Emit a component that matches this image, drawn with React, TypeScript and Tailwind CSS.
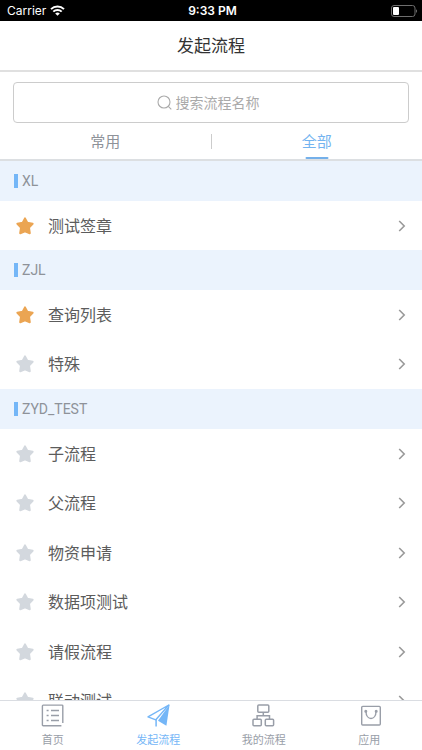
import React, { useState } from 'react';

type Process = { name: string; starred?: boolean };
type Group = { title: string; items: Process[] };

const groups: Group[] = [
  { title: 'XL', items: [{ name: '测试签章', starred: true }] },
  { title: 'ZJL', items: [{ name: '查询列表', starred: true }, { name: '特殊' }] },
  {
    title: 'ZYD_TEST',
    items: [
      { name: '子流程' },
      { name: '父流程' },
      { name: '物资申请' },
      { name: '数据项测试' },
      { name: '请假流程' },
      { name: '联动测试' },
    ],
  },
];

const StatusBar = () => (
  <div className="grid h-[21px] shrink-0 grid-cols-3 items-center bg-black pr-1 pl-[7px] font-[Inter,sans-serif] text-xs text-white">
    <div className="flex items-center gap-1">
      <span>Carrier</span>
      <svg width="15" height="11" viewBox="0 0 15 11" fill="none" stroke="currentColor" strokeWidth="2">
        <path d="M1 4.1a9.3 9.3 0 0 1 13 0" />
        <path d="M3.3 6.6a6 6 0 0 1 8.4 0" />
        <path d="M7.5 10.8 5.2 8.5a3.3 3.3 0 0 1 4.6 0z" fill="currentColor" stroke="none" />
      </svg>
    </div>
    <span className="text-center font-semibold">9:33 PM</span>
    <svg className="justify-self-end" width="27" height="12" viewBox="0 0 27 12">
      <rect x="0.5" y="0.5" width="23.5" height="11" rx="2.5" fill="none" stroke="#6e6e6e" />
      <rect x="2" y="2" width="6" height="8" rx="1" fill="#fff" />
      <path d="M25 4.2c1.4.5 1.4 3.1 0 3.6z" fill="#6e6e6e" />
    </svg>
  </div>
);

const Star: React.FC<{ on?: boolean }> = ({ on }) => (
  <svg
    className={on ? 'text-[#eba553]' : 'text-[#d3d8de]'}
    width="18"
    height="18"
    viewBox="0 0 18 18"
    fill="currentColor"
    stroke="currentColor"
    strokeWidth="2"
    strokeLinejoin="round"
  >
    <path d="M9 1.4l2.3 4.3 5.3 1-3.6 3.9.8 5.6L9 14.4l-4.8 1.8.8-5.6L1.4 6.7l5.3-1z" />
  </svg>
);

const Row: React.FC<{ item: Process }> = ({ item }) => (
  <li className="h-[49px] even:h-[50px]">
    <a href="#" className="flex h-full items-center px-4 text-base text-[#5c5c5c]">
      <Star on={item.starred} />
      <span className="ml-[14px] flex-1 pb-[2px]">{item.name}</span>
      <svg width="8" height="12" viewBox="0 0 8 12" fill="none" stroke="#999" strokeWidth="1.6">
        <path d="M1.2 1l5 5-5 5" />
      </svg>
    </a>
  </li>
);

const navItems = [
  {
    label: '首页',
    icon: (
      <g stroke="currentColor" strokeWidth="1.4" fill="none">
        <path d="M21.8 19V1.9a.8.8 0 0 0-.8-.8H2.2a.8.8 0 0 0-.8.8v19a.8.8 0 0 0 .8.8h18.2" />
        <path d="M10 6.5h8M10 11.5h8M10 16.5h8M5.6 6.5h2M5.6 11.5h2M5.6 16.5h2" />
      </g>
    ),
  },
  {
    label: '发起流程',
    icon: (
      <g>
        <path
          d="M21.8 1L1 12.8l7.8 3z"
          fill="none"
          stroke="currentColor"
          strokeWidth="1.4"
          strokeLinejoin="round"
        />
        <path d="M22.6.5L11 16.8l8.4 4.9z" fill="currentColor" />
        <path d="M9.1 15v7.6" stroke="currentColor" strokeWidth="1.5" />
      </g>
    ),
  },
  {
    label: '我的流程',
    icon: (
      <g stroke="currentColor" strokeWidth="1.5" fill="none">
        <rect x="5.8" y="1" width="11" height="7.2" rx="1" />
        <rect x="1" y="15.3" width="8.3" height="6.4" rx="1" />
        <rect x="13.3" y="15.3" width="8.3" height="6.4" rx="1" />
        <path d="M11.3 8.2v3.6M5.1 15.3v-3.5h12.4v3.5" />
      </g>
    ),
  },
  {
    label: '应用',
    icon: (
      <g stroke="currentColor" strokeWidth="1.4" fill="none">
        <rect x="3.7" y="2.4" width="18.6" height="18.6" rx="1" />
        <path d="M8 7.4c0 9.4 10 9.4 10 0" />
        <circle cx="7.8" cy="7.2" r=".8" fill="currentColor" />
        <circle cx="18.2" cy="7.2" r=".8" fill="currentColor" />
      </g>
    ),
  },
];

const App: React.FC = () => {
  const [tab, setTab] = useState('全部');

  return (
    <div className="flex h-screen flex-col bg-white font-['Noto_Sans_CJK_SC',sans-serif]">
      <StatusBar />

      <header className="flex h-[51px] shrink-0 items-center justify-center border-b-2 border-[#e0e0e0]">
        <h1 className="pb-[2px] text-[17px] text-[#333]">发起流程</h1>
      </header>

      <div className="shrink-0 px-[13px] pt-[10px]">
        <label className="flex h-[41px] items-center justify-center gap-1 rounded-[4px] border border-[#ccc]">
          <svg width="15" height="15" viewBox="0 0 15 15" fill="none" stroke="#aaa" strokeWidth="1.1">
            <circle cx="7" cy="7" r="6" />
            <path d="M11.3 11.3l3 3" />
          </svg>
          <input
            type="text"
            aria-label="搜索流程名称"
            placeholder="搜索流程名称"
            className="w-[90px] pb-[2px] text-sm text-[#555] outline-none placeholder:text-[#aaa]"
          />
        </label>
      </div>

      <div className="flex h-[38px] shrink-0 items-center border-b-2 border-[#dcdfe2]">
        {['常用', '全部'].map((name, i) => (
          <React.Fragment key={name}>
            {i > 0 && <span className="h-[15px] w-px bg-[#ccc]" />}
            <button
              type="button"
              onClick={() => setTab(name)}
              className={`relative h-full flex-1 text-[15px] ${tab === name ? 'text-[#74b4f0]' : 'text-[#8e9299]'}`}
            >
              {name}
              {tab === name && (
                <span className="absolute bottom-0 left-1/2 h-[2px] w-[23px] -translate-x-1/2 rounded-full bg-[#74b0ea]" />
              )}
            </button>
          </React.Fragment>
        ))}
      </div>

      <main className="min-h-0 flex-1 overflow-hidden">
        {groups.map((group) => (
          <section key={group.title}>
            <h2 className="flex h-10 items-center gap-1 bg-[#ebf3fd] pl-[14px] font-[Roboto,sans-serif] text-sm text-[#8e9299]">
              <span className="h-[14px] w-1 bg-[#74b6f7]" />
              {group.title}
            </h2>
            <ul>
              {group.items.map((item) => (
                <Row key={item.name} item={item} />
              ))}
            </ul>
          </section>
        ))}
      </main>

      <nav className="grid h-[50px] shrink-0 grid-cols-4 border-t border-[#dadde2]">
        {navItems.map(({ label, icon }) => (
          <a
            key={label}
            href="#"
            className={`flex flex-col items-center gap-1 pt-[3px] text-[11px] leading-4 ${
              label === '发起流程' ? 'text-[#74b6f7]' : 'text-[#999ea8]'
            }`}
          >
            <svg width="23" height="23" viewBox="0 0 23 23">
              {icon}
            </svg>
            {label}
          </a>
        ))}
      </nav>
    </div>
  );
};

export default App;
